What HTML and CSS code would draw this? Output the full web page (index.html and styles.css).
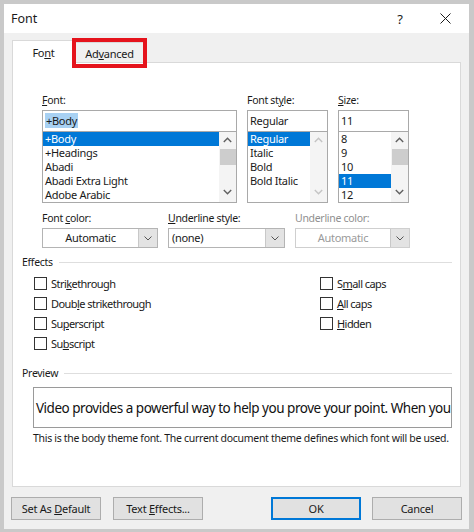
FILE: index.html
```html
<!DOCTYPE html>
<html>
<head>
<meta charset="utf-8">
<title>Font</title>
<link rel="stylesheet" href="styles.css">
</head>
<body>
<div class="window">
  <div class="titlebar">
    <span class="title">Font</span>
    <span class="help">?</span>
    <svg class="close" width="11" height="11" viewBox="0 0 11 11"><path d="M0.5 0.5 L10.5 10.5 M10.5 0.5 L0.5 10.5" stroke="#1b1b1b" stroke-width="1" fill="none"/></svg>
  </div>
  <div class="tabs">
    <div class="tab active"><span>Fo<u>n</u>t</span></div>
    <div class="tab"><span>Ad<u>v</u>anced</span><span class="mark"></span></div>
  </div>
  <div class="panel">
    <div class="fontgrid">
      <div class="col">
        <div class="lbl"><u>F</u>ont:</div>
        <div class="input"><span class="hl">+Body</span></div>
        <div class="list">
          <div class="items">
            <div class="item sel">+Body</div>
            <div class="item">+Headings</div>
            <div class="item">Abadi</div>
            <div class="item">Abadi Extra Light</div>
            <div class="item">Adobe Arabic</div>
          </div>
          <div class="sbar">
            <svg class="arr" width="9" height="6" viewBox="0 0 9 6"><path d="M0.8 5 L4.5 1.3 L8.2 5" stroke="#606060" stroke-width="1.4" fill="none"/></svg>
            <div class="thumb"></div>
            <svg class="arr down" width="9" height="6" viewBox="0 0 9 6"><path d="M0.8 1 L4.5 4.7 L8.2 1" stroke="#606060" stroke-width="1.4" fill="none"/></svg>
          </div>
        </div>
      </div>
      <div class="col">
        <div class="lbl">Font st<u>y</u>le:</div>
        <div class="input">Regular</div>
        <div class="list">
          <div class="items">
            <div class="item sel">Regular</div>
            <div class="item">Italic</div>
            <div class="item">Bold</div>
            <div class="item">Bold Italic</div>
          </div>
          <div class="sbar">
            <svg class="arr" width="9" height="6" viewBox="0 0 9 6"><path d="M0.8 5 L4.5 1.3 L8.2 5" stroke="#c4c4c4" stroke-width="1.4" fill="none"/></svg>
            <div class="nothumb"></div>
            <svg class="arr down" width="9" height="6" viewBox="0 0 9 6"><path d="M0.8 1 L4.5 4.7 L8.2 1" stroke="#c4c4c4" stroke-width="1.4" fill="none"/></svg>
          </div>
        </div>
      </div>
      <div class="col">
        <div class="lbl"><u>S</u>ize:</div>
        <div class="input">11</div>
        <div class="list">
          <div class="items">
            <div class="item">8</div>
            <div class="item">9</div>
            <div class="item">10</div>
            <div class="item sel">11</div>
            <div class="item">12</div>
          </div>
          <div class="sbar">
            <svg class="arr" width="9" height="6" viewBox="0 0 9 6"><path d="M0.8 5 L4.5 1.3 L8.2 5" stroke="#606060" stroke-width="1.4" fill="none"/></svg>
            <div class="thumb"></div>
            <svg class="arr down" width="9" height="6" viewBox="0 0 9 6"><path d="M0.8 1 L4.5 4.7 L8.2 1" stroke="#606060" stroke-width="1.4" fill="none"/></svg>
          </div>
        </div>
      </div>
    </div>

    <div class="drops">
      <div class="dcol">
        <div class="lbl">Font <u>c</u>olor:</div>
        <div class="drop"><span class="dval center">Automatic</span><span class="dbtn"><svg width="8" height="5" viewBox="0 0 8 5"><path d="M0.5 0.5 L4 4 L7.5 0.5" stroke="#555" stroke-width="1" fill="none"/></svg></span></div>
      </div>
      <div class="dcol">
        <div class="lbl"><u>U</u>nderline style:</div>
        <div class="drop"><span class="dval">(none)</span><span class="dbtn"><svg width="8" height="5" viewBox="0 0 8 5"><path d="M0.5 0.5 L4 4 L7.5 0.5" stroke="#555" stroke-width="1" fill="none"/></svg></span></div>
      </div>
      <div class="dcol disabled">
        <div class="lbl">Underline color:</div>
        <div class="drop"><span class="dval center">Automatic</span><span class="dbtn"><svg width="8" height="5" viewBox="0 0 8 5"><path d="M0.5 0.5 L4 4 L7.5 0.5" stroke="#555" stroke-width="1" fill="none"/></svg></span></div>
      </div>
    </div>

    <div class="legend"><span>Effects</span><span class="rule"></span></div>
    <div class="effects">
      <div class="ecol">
        <div class="chk"><span class="box"></span><span>Stri<u>k</u>ethrough</span></div>
        <div class="chk"><span class="box"></span><span>Doub<u>l</u>e strikethrough</span></div>
        <div class="chk"><span class="box"></span><span>Su<u>p</u>erscript</span></div>
        <div class="chk"><span class="box"></span><span>Su<u>b</u>script</span></div>
      </div>
      <div class="ecol">
        <div class="chk"><span class="box"></span><span>S<u>m</u>all caps</span></div>
        <div class="chk"><span class="box"></span><span><u>A</u>ll caps</span></div>
        <div class="chk"><span class="box"></span><span><u>H</u>idden</span></div>
      </div>
    </div>

    <div class="legend prev"><span>Preview</span><span class="rule"></span></div>
    <div class="preview"><span>Video provides a powerful way to help you prove your point. When you</span></div>
    <div class="caption">This is the body theme font. The current document theme defines which font will be used.</div>
  </div>
  <div class="buttons">
    <div class="bgroup">
      <div class="btn"><span>Set As <u>D</u>efault</span></div>
      <div class="btn"><span>Text <u>E</u>ffects...</span></div>
    </div>
    <div class="bgroup right">
      <div class="btn ok"><span>OK</span></div>
      <div class="btn"><span>Cancel</span></div>
    </div>
  </div>
</div>
</body>
</html>
```

FILE: styles.css
```css
* { box-sizing: border-box; }
html, body { margin: 0; padding: 0; }
body {
  background: #c9c9c9;
  font-family: "Noto Sans", "Open Sans", sans-serif;
  font-size: 10.5px;
  letter-spacing: -0.3px;
  color: #1a1a1a;
  width: 474px;
  height: 532px;
  overflow: hidden;
}
u { text-decoration: underline; text-underline-offset: 1px; }

.window {
  margin: 4px 5px 3px 4px;
  height: 525px;
  background: #f0f0f0;
  display: flex;
  flex-direction: column;
}

.titlebar {
  height: 29px;
  background: #fff;
  display: flex;
  align-items: center;
  padding-left: 7px;
}
.title { flex: 1; font-size: 12.5px; letter-spacing: 0; }
.help { font-size: 13px; margin-right: 37px; letter-spacing: 0; }
.close { margin-right: 18px; }

.tabs {
  height: 29px;
  display: flex;
  align-items: flex-end;
  padding-left: 8px;
  font-size: 11px;
  letter-spacing: -0.25px;
}
.tab {
  position: relative;
  height: 20px;
  width: 73px;
  border: 1px solid #d9d9d9;
  border-bottom: none;
  background: #f0f0f0;
  display: flex;
  align-items: center;
  justify-content: center;
  padding-top: 1px;
}
.tab.active {
  width: 61px;
  height: 23px;
  background: #fff;
  margin-bottom: -1px;
  z-index: 1;
  padding-top: 0;
  padding-left: 2px;
}
.mark {
  position: absolute;
  left: -2px;
  right: -2px;
  top: -5px;
  height: 30px;
  border: 4.5px solid #e5131c;
  z-index: 3;
}

.panel {
  margin: 0 8px;
  height: 425px;
  background: #fff;
  border: 1px solid #d9d9d9;
  padding: 29px 8px 0 9px;
}

.lbl { height: 16px; line-height: 16px; }

.fontgrid {
  display: grid;
  grid-template-columns: 195px 81px 71px;
  column-gap: 10px;
  margin-left: 20px;
  font-size: 11px;
  letter-spacing: -0.3px;
}
.fontgrid .lbl { font-size: 10.5px; }
.input {
  margin-top: 2px;
  height: 22px;
  border: 1px solid #a9a9a9;
  padding: 2px 0 0 2px;
  line-height: 16px;
}
.hl { background: #a8d1f3; padding: 0 1px; }
.list {
  height: 71px;
  border: 1px solid #a9a9a9;
  border-top: none;
  display: flex;
  overflow: hidden;
}
.items { flex: 1; }
.item { height: 14px; line-height: 14px; padding-left: 2px; white-space: nowrap; }
.item.sel { background: #0078d7; color: #fff; }
.sbar {
  width: 17px;
  background: #f4f4f4;
  display: flex;
  flex-direction: column;
  align-items: center;
}
.arr { margin-top: 5px; flex: none; }
.arr.down { margin-top: 0; }
.thumb { width: 16px; height: 16px; background: #cdcdcd; margin-top: 6px; margin-bottom: 24px; }
.nothumb { height: 46px; }

.drops {
  display: grid;
  grid-template-columns: 116px 117px 115px;
  column-gap: 10px;
  margin-left: 20px;
  margin-top: 7px;
}
.drop {
  margin-top: 2px;
  height: 20px;
  border: 1px solid #b4b4b4;
  display: flex;
  background: #fff;
  font-size: 11px;
}
.dval { flex: 1; line-height: 18px; padding-left: 3px; }
.dval.center { text-align: center; padding-left: 0; }
.dbtn {
  width: 19px;
  background: #e3e3e3;
  border-left: 1px solid #c8c8c8;
  display: flex;
  align-items: center;
  justify-content: center;
}
.disabled { color: #8f8f8f; }
.disabled .drop { border-color: #cfcfcf; }
.disabled .dval { color: #9a9a9a; }

.legend {
  display: flex;
  align-items: center;
  height: 16px;
  margin-top: 6px;
}
.rule { flex: 1; height: 1px; background: #dedede; margin-left: 6px; }
.legend.prev { margin-top: 12px; }

.effects {
  display: flex;
  margin-top: 3px;
  margin-left: 12px;
  font-size: 11px;
  letter-spacing: -0.55px;
}
.ecol { display: flex; flex-direction: column; }
.ecol:first-child { width: 286px; }
.chk {
  height: 20px;
  display: flex;
  align-items: center;
  white-space: nowrap;
}
.box {
  width: 13px;
  height: 13px;
  border: 1px solid #333;
  background: #fff;
  margin-right: 4px;
  flex: none;
}

.preview {
  margin: 6px 0 0 11px;
  height: 41px;
  border: 1px solid #9a9a9a;
  overflow: hidden;
  white-space: nowrap;
  padding-left: 2px;
  display: flex;
  align-items: center;
  font-size: 13.5px;
  letter-spacing: -0.48px;
  color: #111;
}
.caption {
  margin: 2px 0 0 11px;
  height: 16px;
  line-height: 16px;
  white-space: nowrap;
}

.buttons {
  display: flex;
  justify-content: space-between;
  padding: 10px 7px 0 7px;
  font-size: 11px;
  letter-spacing: -0.25px;
}
.bgroup { display: flex; gap: 12px; }
.bgroup.right { gap: 11px; }
.btn {
  width: 90px;
  height: 23px;
  background: #e1e1e1;
  border: 1px solid #adadad;
  display: flex;
  align-items: center;
  justify-content: center;
}
.btn.ok { border: 2px solid #0078d7; }
```
